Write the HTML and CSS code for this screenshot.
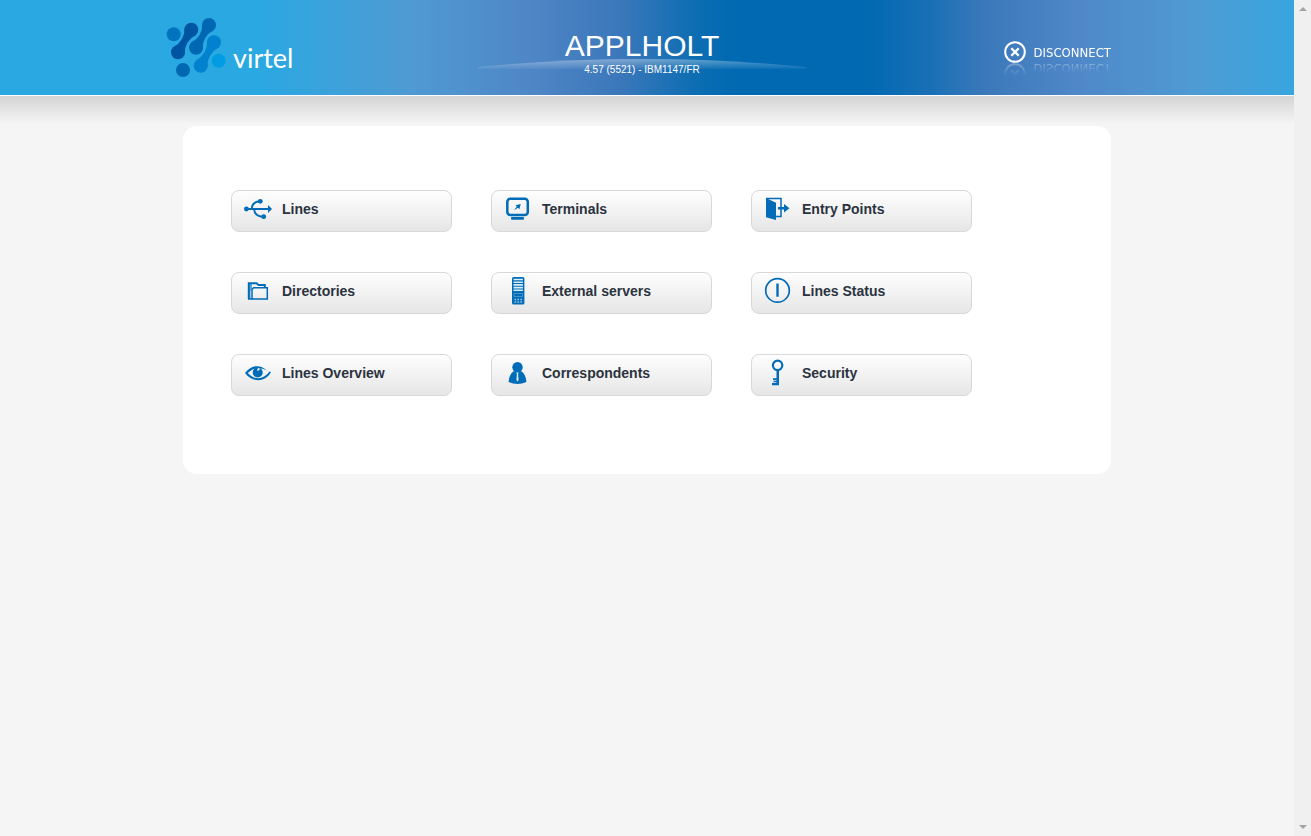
FILE: index.html
```html
<!DOCTYPE html>
<html lang="en">
<head>
<meta charset="utf-8">
<meta name="viewport" content="width=device-width, initial-scale=1">
<title>APPLHOLT</title>
<link rel="stylesheet" href="styles.css">
</head>
<body>
<div class="page">
  <header class="banner">
    <div class="banner-inner">
      <div class="brand">
        <svg class="brand-mark" viewBox="0 0 60 60" aria-hidden="true">
          <circle cx="7.7" cy="17.3" r="7" fill="#0074be"/>
          <g fill="#0055a2"><circle cx="25.3" cy="12.7" r="7"/><circle cx="12" cy="35.3" r="7"/><path d="M29.9 17.7Q18.7 24 18.6 36.9L7.4 30.3Q18.7 24 18.7 11.1Z"/></g>
          <g fill="#0068b3"><circle cx="43" cy="8" r="7"/><circle cx="30" cy="30.7" r="7"/><path d="M47.6 13Q36.5 19.4 36.3 32.2L25.1 25.6Q36.5 19.4 36.4 6.4Z"/></g>
          <g fill="#0082ce"><circle cx="48" cy="25.3" r="7"/><circle cx="34.7" cy="48.7" r="7"/><path d="M52.6 30.3Q41.4 37 41.3 49.9L30.1 43.3Q41.4 37 41.4 23.7Z"/></g>
          <circle cx="17" cy="53" r="7" fill="#0068b0"/>
          <circle cx="52.7" cy="43.7" r="7" fill="#009de3"/>
        </svg>
        <span class="brand-name">virtel</span>
      </div>
      <div class="app">
        <svg class="app-arc" viewBox="0 0 328 10" preserveAspectRatio="none" aria-hidden="true">
          <defs><linearGradient id="arc" x1="0" y1="0" x2="0" y2="1"><stop offset="0" stop-color="#fff" stop-opacity=".36"/><stop offset="1" stop-color="#fff" stop-opacity=".04"/></linearGradient></defs>
          <path d="M0 8Q164 -8 328 8V10H0Z" fill="url(#arc)"/>
        </svg>
        <h1 class="app-name">APPLHOLT</h1>
        <p class="app-version">4.57 (5521) - IBM1147/FR</p>
      </div>
      <a class="disconnect" href="#disconnect">
        <svg class="disconnect-icon" viewBox="0 0 22 22" aria-hidden="true"><circle cx="11" cy="11" r="9.8"/><path d="M7.3 7.3l7.4 7.4M14.7 7.3l-7.4 7.4" stroke-width="2.3"/></svg>
        <span class="disconnect-label">DISCONNECT</span>
      </a>
    </div>
  </header>
  <main class="content">
    <nav class="menu" aria-label="Administration">
      <a class="tile" href="#lines">
        <svg class="icon" viewBox="0 0 28 28" aria-hidden="true"><path d="M2 14h23M7.7 14C8 9 10.5 6.5 16 6.3M10 14C10.5 19 13 21.500 19 21.700" fill="none" stroke="currentColor" stroke-width="1.900"/><circle cx="2.400" cy="14" r="2.400"/><circle cx="16.300" cy="6.300" r="2.400"/><circle cx="19.700" cy="21.700" r="2.400"/><path d="M24 10l4 4-4 4z"/></svg>
        <span>Lines</span>
      </a>
      <a class="tile" href="#terminals">
        <svg class="icon" viewBox="0 0 28 28" aria-hidden="true"><rect x="3.300" y="3.700" width="20.500" height="16.300" rx="3" fill="none" stroke="currentColor" stroke-width="2.500"/><rect x="7" y="22" width="13" height="2.800" rx="1"/><path d="M16.700 9l-5.200 1.200 1.300 1.300-2.700 3.700 3.900-2.400 1.400 1.400z"/></svg>
        <span>Terminals</span>
      </a>
      <a class="tile" href="#entry-points">
        <svg class="icon" viewBox="0 0 28 28" aria-hidden="true"><path d="M2 3l10 4.700V25L2 22.300z"/><path d="M2 3.500h15v18h-5" fill="none" stroke="currentColor" stroke-width="1.500"/><path d="M14 12h6V9l5.500 4.200-5.500 4.200v-3h-6z"/></svg>
        <span>Entry Points</span>
      </a>
      <a class="tile" href="#directories">
        <svg class="icon" viewBox="0 0 28 28" aria-hidden="true"><path d="M4.800 22V6.200h7.700l2 1.700h6.300V10" fill="none" stroke="currentColor" stroke-width="2"/><path d="M8 22V12.500l1.500-1.800H23.300V22H4" fill="none" stroke="currentColor" stroke-width="1.500"/><path d="M5 7h3v5l-1.500 2v8H5z" opacity=".6"/></svg>
        <span>Directories</span>
      </a>
      <a class="tile" href="#external-servers">
        <svg class="icon" viewBox="0 0 28 28" aria-hidden="true"><rect x="8" y="0" width="12.400" height="27.500" rx="1.500"/><path d="M9.500 2.500h9.400M9.500 5.200h9.400M9.500 7.900h9.400M9.500 10.600h9.400M9.500 13.300h9.400" stroke="#d9ecf8" stroke-width="1.600"/><path d="M10 16.500h8.500v3H10z" fill="none" stroke="#4f9dd0" stroke-width=".8"/><path d="M10.500 22.500h1.700M13.400 22.500h1.700M16.300 22.500H18M10.500 25h1.700M13.400 25h1.700M16.300 25H18" fill="none" stroke="#8fc0e3" stroke-width="1.300"/></svg>
        <span>External servers</span>
      </a>
      <a class="tile" href="#lines-status">
        <svg class="icon" viewBox="0 0 28 28" aria-hidden="true"><circle cx="13.500" cy="13.400" r="11.800" fill="none" stroke="currentColor" stroke-width="1.700"/><path d="M13.500 6.500v13.200" stroke="currentColor" stroke-width="2.400"/></svg>
        <span>Lines Status</span>
      </a>
      <a class="tile" href="#lines-overview">
        <svg class="icon" viewBox="0 0 28 28" aria-hidden="true"><path d="M1 14C7 6 16 5 23 11.500C15 7.500 9 9 3.800 14C10 21 19 21.500 25.500 12.500L27 13C21 24 8 23.500 1 14Z"/><path d="M13.700 8.500a5 5 0 1 0 5 5a5 5 0 0 0-3-4.500a1.900 1.900 0 0 1-2.500 2.500z"/></svg>
        <span>Lines Overview</span>
      </a>
      <a class="tile" href="#correspondents">
        <svg class="icon" viewBox="0 0 28 28" aria-hidden="true"><circle cx="13.500" cy="8.200" r="5.200"/><path d="M9.500 12.200h8c3 2.500 4.700 6 4.900 10.800q-8.900 4-17.800 0c.2-4.800 1.900-8.300 4.900-10.800z"/><path d="M12.300 13.500h2.400l-.6 1.700.5 5.500-1.100 2-1.100-2 .5-5.500z" fill="#d9ecf8"/></svg>
        <span>Correspondents</span>
      </a>
      <a class="tile" href="#security">
        <svg class="icon" viewBox="0 0 28 28" aria-hidden="true"><circle cx="13.600" cy="6.300" r="4.700" fill="none" stroke="currentColor" stroke-width="2.200"/><path d="M12.500 11h2.500v15.300H8v-2.300h4.500v-.7H9.500v-1.600h3v-.6H9v-1.800h3.500z"/></svg>
        <span>Security</span>
      </a>
    </nav>
  </main>
</div>
<div class="scroll-track" aria-hidden="true">
  <span class="arrow-up"></span>
  <span class="arrow-down"></span>
</div>
</body>
</html>
```
FILE: styles.css
```css
* {
  box-sizing: border-box;
}

body {
  margin: 0;
  min-height: 100vh;
  display: flex;
  background: #f5f5f5;
  font-family: "Liberation Sans", Arial, sans-serif;
}

.page {
  flex: 1;
}

.banner {
  border-bottom: 1px solid #fff;
  background: linear-gradient(90deg, #2aa8e2 0%, #2aa8e2 20%, #4f9ad2 32%, #4f86c6 41%, #3a77ba 48%, #0b6db2 54%, #0069b2 57%, #0069b2 67%, #1a70b5 72%, #3a78ba 76%, #4f87c8 83%, #4f9ad2 92%, #38a5df 100%);
}

.banner-inner {
  max-width: 962px;
  height: 95px;
  margin: 0 auto;
  padding-right: 10px;
  display: grid;
  grid-template-columns: 1fr 328px 1fr;
}

.brand {
  display: flex;
  align-items: flex-start;
  gap: 7px;
  padding-top: 17px;
}

.brand-mark {
  width: 60px;
  height: 60px;
}

.brand-name {
  padding-top: 25px;
  color: #fff;
  font: 27px/32px Lato, sans-serif;
}

.app {
  position: relative;
  padding-top: 29px;
  color: #fff;
  text-align: center;
}

.app-arc {
  position: absolute;
  top: 59px;
  left: 0;
  width: 100%;
  height: 10px;
}

.app-name {
  position: relative;
  margin: 0;
  font-size: 30px;
  font-weight: 400;
  line-height: 34px;
}

.app-version {
  position: relative;
  margin: 0;
  font-size: 10px;
  line-height: 14px;
}

.disconnect {
  justify-self: end;
  display: flex;
  align-items: flex-start;
  gap: 8px;
  padding-top: 41px;
  margin-right: 7px;
  color: #fff;
  text-decoration: none;
}

.disconnect-icon {
  width: 22px;
  height: 22px;
  fill: none;
  stroke: #fff;
  stroke-width: 2;
  -webkit-box-reflect: below 0 linear-gradient(transparent 40%, rgba(255, 255, 255, 0.3));
}

.disconnect-label {
  font: 13px/24px "DejaVu Sans Condensed", "Open Sans", sans-serif;
  -webkit-box-reflect: below -9px linear-gradient(transparent 30%, rgba(255, 255, 255, 0.6));
}

.content {
  padding: 30px 16px;
  background: linear-gradient(#d4d4d4, #f5f5f5 28px);
}

.menu {
  max-width: 928px;
  margin: 0 auto;
  padding: 64px 48px 78px;
  display: grid;
  grid-template-columns: repeat(auto-fill, 221px);
  gap: 40px 39px;
  border-radius: 14px;
  background: #fff;
}

.tile {
  height: 42px;
  display: flex;
  align-items: center;
  gap: 10px;
  padding: 0 12px 4px;
  border: 1px solid #d8d8d8;
  border-radius: 8px;
  background: linear-gradient(#fefefe, #e6e6e6);
  color: #2b333f;
  font-size: 14px;
  font-weight: 700;
  text-decoration: none;
}

.icon {
  width: 28px;
  height: 28px;
  color: #006cb7;
  fill: currentColor;
}

.scroll-track {
  width: 17px;
  display: flex;
  flex-direction: column;
  justify-content: space-between;
  align-items: center;
  padding: 7px 0;
  background: #f0f0f0;
}

.arrow-up,
.arrow-down {
  border: 4px solid transparent;
}

.arrow-up {
  border-top: 0;
  border-bottom-color: #a3a3a3;
}

.arrow-down {
  border-bottom: 0;
  border-top-color: #a3a3a3;
}
```
